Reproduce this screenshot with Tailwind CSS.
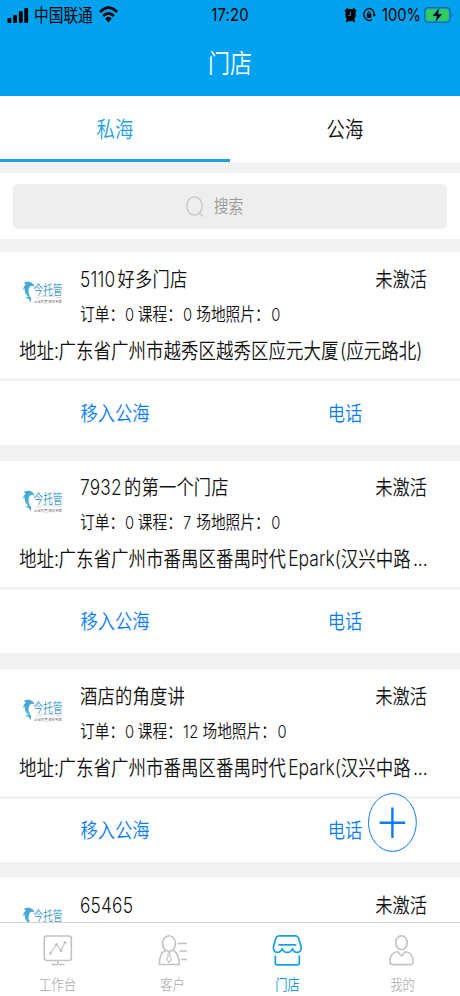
<!DOCTYPE html>
<html lang="zh-CN">
<head>
<meta charset="utf-8">
<meta name="viewport" content="width=device-width, initial-scale=1">
<title>门店</title>
<script src="https://cdn.jsdelivr.net/npm/@tailwindcss/browser@4"></script>
</head>
<body class="bg-[#f2f2f2]">
<div class="relative flex h-[996px] w-[460px] flex-col overflow-hidden bg-[#f2f2f2] font-['Inter','Noto_Sans_CJK_SC',sans-serif] font-[350] text-[#111] whitespace-nowrap">

  <header class="h-24 shrink-0 bg-[#02a2ee]">
    <div class="grid h-[30px] grid-cols-3 items-center px-[7px] text-[14.7px] font-normal text-black">
      <div class="flex items-center">
        <svg class="h-[16px] w-[22px]" viewBox="0 0 22 16"><rect x=".5" y="11" width="3.8" height="5" rx="1"/><rect x="6.2" y="8" width="3.8" height="8" rx="1"/><rect x="11.9" y="4" width="3.8" height="12" rx="1"/><rect x="17.3" y="1" width="3.8" height="15" rx="1"/></svg>
        <span class="ml-[5px] mt-[2px] scale-y-[1.2]">中国联通</span>
        <svg class="ml-[6px] h-[17px] w-[19px]" viewBox="0 0 19 17" fill="none" stroke="#000" stroke-width="2.7"><path d="M1 6Q9.500-2.500 18 6M4.200 10Q9.500 4.700 14.800 10"/><path d="M6.200 12.400Q9.500 9.300 12.800 12.400L9.500 16.500Z" fill="#000" stroke="none"/></svg>
      </div>
      <div class="flex justify-center"><span class="scale-y-[1.2] tracking-[.2px]">17:20</span></div>
      <div class="-mr-[1px] flex items-center justify-end">
        <svg class="h-[16px] w-[13px]" viewBox="0 0 13 16"><ellipse cx="6.500" cy="8" rx="5.200" ry="6.300"/><path d="M1 4.500 4 1.500M12 4.500 9 1.500M2.500 15 4 12M10.500 15 9 12" stroke="#000" stroke-width="1.800"/><path d="M6.500 4.500v4H4.300" stroke="#02a2ee" stroke-width=".8" fill="none"/></svg>
        <svg class="ml-[6px] h-[15px] w-[13px]" viewBox="0 0 13 14" fill="none" stroke="#000" stroke-width="1.300"><path d="M9 12A5.200 6 0 1 1 11.300 7.500"/><path d="m9.300 7 2 2.200L13 7Z" fill="#000" stroke="none"/><rect x="3.900" y="6.300" width="4.400" height="4" fill="#000" stroke="none"/><path d="M4.800 6.500V5q1.300-1.800 2.600 0v1.500" stroke-width="1"/></svg>
        <span class="ml-[6px] scale-y-[1.2]">100%</span>
        <svg class="ml-[3px] h-[18px] w-[30px]" viewBox="0 0 30 18"><rect x=".6" y="1.600" width="25.600" height="14.800" rx="3.500" fill="none" stroke="#1d6b8f" stroke-width="1.100"/><rect x="2.200" y="3.300" width="22.400" height="11.400" rx="2" fill="#35cb5b"/><path d="M27.700 6.500q2 2.500 0 5Z" fill="#1d6b8f"/><path d="M15.500 1.500 8.500 10h4.300l-1.600 6.500L18.300 8h-4.200Z" fill="#000" stroke="#02a2ee" stroke-width=".5"/></svg>
      </div>
    </div>
    <h1 class="flex h-[68px] items-center justify-center text-[22px] text-white"><span class="scale-y-[1.2]">门店</span></h1>
  </header>

  <nav class="grid h-[66px] shrink-0 grid-cols-2 bg-white text-[18.4px]">
    <div class="flex items-center justify-center border-b-[3px] border-[#1c9fe6] pt-[5px] text-[#1c9fe6]"><span class="scale-y-[1.2]">私海</span></div>
    <div class="flex items-center justify-center pt-[2px]"><span class="scale-y-[1.2]">公海</span></div>
  </nav>

  <div class="mt-[11px] h-[66px] shrink-0 bg-white px-[13px] pt-[11px]">
    <div class="flex h-[45px] items-center justify-center gap-[10px] rounded-[5px] bg-[#eee] pr-[31px] text-[14.7px] text-[#999]">
      <svg class="h-[21px] w-[18px]" viewBox="0 0 18 21" fill="none" stroke="#c4c4c4" stroke-width="1.200"><ellipse cx="8.500" cy="10" rx="7.700" ry="9.200"/><path d="m13.500 17 3.700 3.500"/></svg>
      <span class="mt-[2px] scale-y-[1.2]">搜索</span>
    </div>
  </div>

  <main id="stores" class="mb-[74px] flex min-h-0 flex-1 flex-col gap-[16.3px] overflow-hidden pt-[13px]"></main>

  <button aria-label="新增" class="absolute left-[368px] top-[793px] h-[59px] w-[49px]">
    <svg class="h-full w-full" viewBox="0 0 49 59" fill="none" stroke="#0a7cf5"><ellipse cx="24.400" cy="29.500" rx="23.900" ry="28.900" fill="#fff" fill-opacity=".8" stroke-width="1"/><path d="M24.400 14.500v30.500M11.700 29.700h25.500" stroke-width="2.400"/></svg>
  </button>

  <footer class="absolute inset-x-0 bottom-0 grid h-[74px] grid-cols-4 border-t border-[#d4d4d4] bg-white text-[12.3px] text-[#b8b8b8]">
    <div class="flex flex-col items-center pt-[11px]">
      <svg class="h-[33px] w-[32px]" viewBox="0 0 32 33" fill="none" stroke="#c3c3c3" stroke-width="1.600"><rect x="2.300" y="2" width="27" height="24.500" rx="2.500"/><path d="M15.800 26.500v4M9.500 30.500h13"/><path d="m8.500 19 6-8 4.500 5.500 4-8" stroke-width="1.100"/><g fill="#c3c3c3" stroke="none"><circle cx="8.500" cy="19" r="1.500"/><circle cx="14.500" cy="10.500" r="1.500"/><circle cx="19" cy="16.500" r="1.500"/><circle cx="23" cy="8.500" r="1.500"/></g></svg>
      <span class="mt-[8px] leading-[20px] scale-y-[1.2]">工作台</span>
    </div>
    <div class="flex flex-col items-center pt-[11px]">
      <svg class="h-[33px] w-[32px]" viewBox="0 0 32 33" fill="none" stroke="#c3c3c3" stroke-width="1.600"><ellipse cx="12" cy="9.500" rx="6.400" ry="7.700"/><path d="M8.500 16.500C4 18.500 2.300 23 2.300 30.500h20c0-7.500-1.800-12-6.300-14M20.500 9.500H30M22.500 17H30M24 25.500h6"/><path d="m12 18-1.300 2 .6 1.500-1.500 4L12 28.300l2.200-2.800-1.500-4 .6-1.500Z" stroke-width="1.100"/></svg>
      <span class="mt-[8px] leading-[20px] scale-y-[1.2]">客户</span>
    </div>
    <div class="flex flex-col items-center pt-[11px] text-[#1296db]">
      <svg class="h-[33px] w-[32px]" viewBox="0 0 32 33" fill="none" stroke="#159fe4" stroke-width="1.700" stroke-linejoin="round" stroke-linecap="round"><path d="M6.800 1.800h16.800q2 0 2.800 2L29 12c.7 4-1 6.400-3.600 6.400-2.700 0-4.200-1.500-5-3.700-.9 2.200-2.600 3.700-5.100 3.700s-4.200-1.500-5.100-3.700c-.8 2.200-2.300 3.700-5 3.700-2.600 0-4.300-2.400-3.600-6.400L4 3.800q.8-2 2.800-2ZM7.100 10.900h16.400M3.300 22v7q0 1.800 1.800 1.800h20.400q1.800 0 1.800-1.800v-7"/></svg>
      <span class="mt-[8px] leading-[20px] scale-y-[1.2]">门店</span>
    </div>
    <div class="flex flex-col items-center pt-[11px]">
      <svg class="h-[33px] w-[32px]" viewBox="0 0 32 33" fill="none" stroke="#c3c3c3" stroke-width="1.600" stroke-linejoin="round"><ellipse cx="14.500" cy="8.800" rx="5.700" ry="7"/><path d="M10.800 17.800 14.500 22l3.700-4.200c4.700 0 7.900 4 7.900 9.500q0 3.300-2.700 3.300H5.600q-2.700 0-2.700-3.300c0-5.500 3.200-9.500 7.900-9.500Z"/></svg>
      <span class="mt-[8px] leading-[20px] scale-y-[1.2]">我的</span>
    </div>
  </footer>
</div>

<template id="card">
  <article class="h-[192.5px] shrink-0 bg-white text-[17.3px] [text-autospace:normal]">
    <div class="box-content flex h-[126px] flex-col border-b-[3px] border-[#f3f3f3]">
      <div class="flex h-[80px] pl-[23px] pr-[33px]">
        <div class="w-[57px] shrink-0 pt-[28px]">
          <svg class="h-[26px] w-[42px] overflow-visible" viewBox="0 0 42 26"><path d="M.8 3C4 .8 9.800 .8 12 7 9.500 5 6.800 5.500 6 8.500c-.7 4 0 7 2.300 9.700L7.500 22.500 5.900 19 2 17.500l3.400-.5C2.400 14 1.200 11.500 1.800 8.200L.3 10C.2 7.500 1 6 2.700 5Q2.500 3.700.8 3Z" fill="#4aa9d4"/><path d="M6.500 7.500C5 11 5.400 15 8 18" fill="none" stroke="#a6dcf0" stroke-width=".9"/><g transform="scale(1 1.3)"><text x="10.500" y="10.500" textLength="29" lengthAdjust="spacingAndGlyphs" font-size="9.800" font-weight="400" fill="#4c9fd0">今托管</text></g><path d="M13 18Q25 14.800 38 18" fill="none" stroke="#bbb" stroke-width=".5"/><text x="11" y="23" textLength="28" lengthAdjust="spacingAndGlyphs" font-size="3.500" fill="#555">企业托管 顾问专家</text></svg>
        </div>
        <div class="min-w-0 flex-1 pt-[12.500px]">
          <div class="flex justify-between leading-[30px]"><span data-name class="origin-left scale-y-[1.2] tracking-[.2px]"></span><span class="scale-y-[1.2]">未激活</span></div>
          <div data-meta class="flex gap-[3.5px] pt-[5px] text-[14.7px] leading-[30px]">
            <span class="scale-y-[1.2]">订单：<b data-orders class="ml-[1px] font-[350] tracking-[.2px]"></b></span><span class="scale-y-[1.2]">课程：<b data-courses class="ml-[1px] inline-block min-w-[9.800px] font-[350] tracking-[.6px]"></b></span><span class="scale-y-[1.2]">场地照片：<b data-photos class="ml-[1.500px] font-[350]"></b></span>
          </div>
        </div>
      </div>
      <div data-place class="flex pl-[19px] pt-[3.500px] text-[17.5px] leading-[30px]"><span class="w-[39.500px] scale-y-[1.2] [text-autospace:no-autospace]">地址:</span><span data-address class="scale-y-[1.2]"></span></div>
    </div>
    <div class="grid h-[64px] grid-cols-2 items-center pt-[1px] text-center text-[#0a7cf5]"><span class="scale-y-[1.2]">移入公海</span><span class="scale-y-[1.2]">电话</span></div>
  </article>
</template>
<script>
const stores = [
  { name: '5110好多门店', orders: 0, courses: 0, photos: 0, address: '广东省广州市越秀区越秀区应元大厦\u200a(应元路北)' },
  { name: '7932的第一个门店', orders: 0, courses: 7, photos: 0, address: '广东省广州市番禺区番禺时代Epark(汉兴中路...' },
  { name: '酒店的角度讲', orders: 0, courses: 12, photos: 0, address: '广东省广州市番禺区番禺时代Epark(汉兴中路...' },
  { name: '65465' }
];
for (const store of stores) {
  const card = document.getElementById('card').content.cloneNode(true);
  card.querySelector('[data-name]').textContent = store.name;
  if (store.address) {
    for (const key of ['orders', 'courses', 'photos']) card.querySelector(`[data-${key}]`).textContent = store[key];
    card.querySelector('[data-address]').textContent = store.address;
  } else {
    card.querySelector('[data-meta]').remove();
    card.querySelector('[data-place]').remove();
    card.querySelector('article').lastElementChild.remove();
  }
  document.getElementById('stores').append(card);
}
</script>
</body>
</html>
